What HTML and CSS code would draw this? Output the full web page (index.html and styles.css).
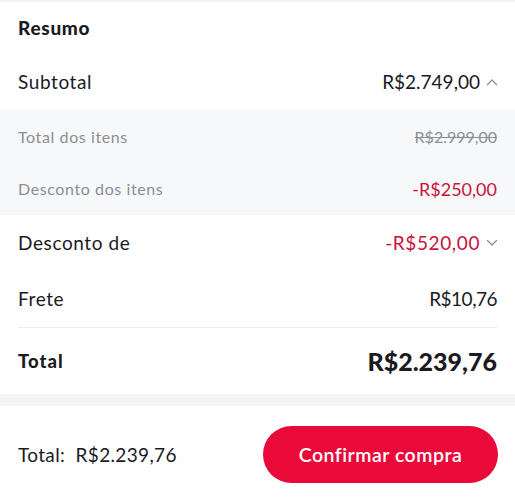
FILE: index.html
```html
<!DOCTYPE html>
<html lang="pt-BR">
<head>
<meta charset="utf-8">
<link rel="stylesheet" href="styles.css">
</head>
<body>
<div class="page">
  <div class="topline"></div>
  <section class="summary">
    <h2 class="title">Resumo</h2>
    <div class="row">
      <span class="label">Subtotal</span>
      <span class="val">R$2.749,00
        <svg class="chev" viewBox="0 0 12 8" width="12" height="8"><path d="M1.5 6.5 L6 2 L10.5 6.5" fill="none" stroke="#8a8d93" stroke-width="1.3" stroke-linecap="round" stroke-linejoin="round"/></svg>
      </span>
    </div>
    <div class="details">
      <div class="row sub">
        <span class="label">Total dos itens</span>
        <span class="strike">R$2.999,00</span>
      </div>
      <div class="row sub">
        <span class="label">Desconto dos itens</span>
        <span class="red">-R$250,00</span>
      </div>
    </div>
    <div class="row desc">
      <span class="label">Desconto de</span>
      <span class="val red wide">-R$520,00
        <svg class="chev" viewBox="0 0 12 8" width="12" height="8"><path d="M1.5 1.5 L6 6 L10.5 1.5" fill="none" stroke="#8a8d93" stroke-width="1.3" stroke-linecap="round" stroke-linejoin="round"/></svg>
      </span>
    </div>
    <div class="row frete">
      <span class="label">Frete</span>
      <span class="narrow">R$10,76</span>
    </div>
    <div class="divider"></div>
    <div class="row total">
      <span class="total-label">Total</span>
      <span class="total-val">R$2.239,76</span>
    </div>
  </section>
  <div class="band"></div>
  <footer class="footer">
    <span class="foot-total">Total:&nbsp; R$2.239,76</span>
    <button class="confirm">Confirmar compra</button>
  </footer>
</div>
</body>
</html>
```
FILE: styles.css
```css
* { box-sizing: border-box; }
html, body { margin: 0; padding: 0; background: #fff; }
body {
  font-family: "Lato", "Noto Sans", sans-serif;
  color: #1b1b1f;
  width: 515px;
  height: 500px;
  overflow: hidden;
}
.page { display: flex; flex-direction: column; }
.topline { height: 2px; background: #f2f3f5; }
.summary { display: flex; flex-direction: column; }
.title {
  margin: 0;
  height: 51px;
  padding: 0 18px;
  display: flex;
  align-items: center;
  font-size: 19px;
  font-weight: 900;
  letter-spacing: 0.7px;
}
.row {
  display: flex;
  justify-content: space-between;
  align-items: center;
  height: 57px;
  padding: 0 18px;
  font-size: 19px;
}
.label { letter-spacing: 0.6px; }
.val { display: flex; align-items: center; gap: 6px; }
.wide { letter-spacing: 0.6px; }
.narrow { letter-spacing: -0.5px; }
.chev { display: block; margin-right: -1px; }
.details { background: #f7f8fa; }
.row.sub { height: 52.5px; font-size: 16px; color: #8b8e94; }
.strike { text-decoration: line-through; }
.red { color: #c8143c; }
.row.sub .red { color: #c8143c; font-size: 18px; }
.row.desc { height: 55px; }
.row.frete { height: 57px; }
.divider { height: 1px; background: #ececee; margin: 0 18px; }
.row.total { height: 66px; }
.total-label { font-size: 18.5px; font-weight: 900; letter-spacing: 1px; }
.total-val { font-size: 25px; font-weight: 900; }
.band { height: 12px; background: #f4f4f5; }
.footer {
  display: flex;
  justify-content: space-between;
  align-items: center;
  padding: 20px 17px 0 18px;
}
.foot-total { font-size: 19px; letter-spacing: 0.35px; }
.confirm {
  border: none;
  background: #ea0a3a;
  color: #fff;
  font-family: inherit;
  font-size: 19.5px;
  font-weight: 600;
  letter-spacing: 0.5px;
  width: 235px;
  height: 57px;
  border-radius: 29px;
  padding: 0;
}
```
